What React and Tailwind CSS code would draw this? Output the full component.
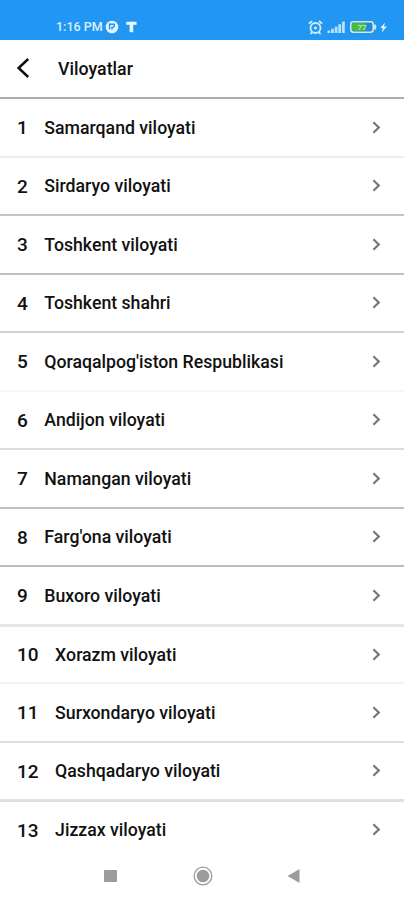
import clsx from "clsx"

const regions = [
  { name: "Samarqand viloyati", line: "border-t-2 border-[#acacac]" },
  { name: "Sirdaryo viloyati", line: "border-t-2 border-[#ececec]" },
  { name: "Toshkent viloyati", line: "border-t-2 border-[#c4c4c4]" },
  { name: "Toshkent shahri", line: "border-t-2 border-[#c0c0c0]" },
  { name: "Qoraqalpog'iston Respublikasi", line: "border-t-2 border-[#d0d0d0]" },
  { name: "Andijon viloyati", line: "border-t-2 border-[#f6f6f6]" },
  { name: "Namangan viloyati", line: "border-t-2 border-[#dcdcdc]" },
  { name: "Farg'ona viloyati", line: "border-t-2 border-[#c0c0c0]" },
  { name: "Buxoro viloyati", line: "border-t-2 border-[#bcbcbc]" },
  { name: "Xorazm viloyati", line: "border-t-3 border-[#e6e6e6]" },
  { name: "Surxondaryo viloyati", line: "border-t-2 border-[#f2f2f2]" },
  { name: "Qashqadaryo viloyati", line: "border-t-2 border-[#dedede]" },
  { name: "Jizzax viloyati", line: "border-t-3 border-[#dfdfdf]" },
]

function AlarmIcon() {
  return (
    <svg width="15" height="15" viewBox="0 0 15 15" fill="none" stroke="#d0ecfb" strokeWidth="1.8" strokeLinecap="round">
      <circle cx="7.5" cy="8" r="5" />
      <circle cx="7.5" cy="8" r="1.5" fill="#d0ecfb" stroke="none" />
      <path d="M1.4 3.2 3.6 1.5M13.6 3.2 11.4 1.5M3.8 12.5 3 13.5M11.2 12.5l.8 1" />
    </svg>
  )
}

function SignalIcon() {
  return (
    <svg width="19" height="12" viewBox="0 0 19 12" fill="#b9dffa">
      <rect x="0.5" y="9.5" width="2.8" height="2.5" />
      <rect x="4.1" y="7.8" width="2.8" height="4.2" />
      <rect x="7.7" y="5.6" width="2.8" height="6.4" />
      <rect x="11.3" y="3.2" width="2.8" height="8.8" />
      <rect x="15" y="0.6" width="2.8" height="11.4" />
    </svg>
  )
}

function BatteryIcon() {
  return (
    <svg width="27" height="12" viewBox="0 0 27 12">
      <rect x="0.8" y="0.8" width="22.4" height="10.4" rx="2.6" fill="#2488d6" stroke="#c9ecea" strokeWidth="1.6" />
      <rect x="2.2" y="2.2" width="13.5" height="7.6" rx="0.8" fill="#4fbb3c" />
      <path d="M24 3.5h1.2q1 0 1 1v3q0 1-1 1H24z" fill="#c9ecea" />
      <text x="12" y="9" fontSize="8" fontWeight="500" textAnchor="middle" fill="#b5ecb9">
        77
      </text>
    </svg>
  )
}

function StatusBar() {
  return (
    <div className="flex h-[39.5px] shrink-0 items-start justify-between bg-[#2196f3] pt-[19px] pr-[17px] pl-14">
      <div className="flex h-4 items-center text-[#d9f0ff]">
        <span className="w-[48px] text-[12.5px] font-medium whitespace-nowrap">1:16 PM</span>
        <svg className="ml-px" width="14" height="14" viewBox="0 0 14 14">
          <circle cx="7" cy="7" r="6.3" fill="#e3f4ff" />
          <path d="M4.6 3.2v6.3M4.6 4.3h4.6v1.2q0 2-2.2 2v2" fill="none" stroke="#2196f3" strokeWidth="1.5" />
        </svg>
        <svg className="ml-[7px]" width="11" height="12" viewBox="0 0 11 12" fill="#e9f7ff">
          <rect x="0.2" y="0.8" width="10.4" height="3" />
          <rect x="3.6" y="0.8" width="3.6" height="10.4" />
        </svg>
      </div>
      <div className="flex h-4 items-center">
        <AlarmIcon />
        <div className="ml-[4px]">
          <SignalIcon />
        </div>
        <div className="ml-1">
          <BatteryIcon />
        </div>
        <svg className="ml-[3px]" width="7" height="11" viewBox="0 0 7 11" fill="#e0f3ff">
          <path d="M5 0.5 0.3 6h2.5L1.8 10.5 6.8 4.6H4z" />
        </svg>
      </div>
    </div>
  )
}

function Header() {
  return (
    <header className="flex h-[57.5px] shrink-0 items-center pl-4">
      <svg width="14" height="20" viewBox="0 0 14 20" fill="none" stroke="#111" strokeWidth="2.5">
        <path d="M12.2 1 2.6 10l9.6 9" />
      </svg>
      <h1 className="ml-7 pt-[2px] text-[17.8px] font-medium">Viloyatlar</h1>
    </header>
  )
}

function RegionRow({ index, name, line }) {
  return (
    <li className={clsx("flex h-[58.5px] items-center justify-between pr-[23px] pl-[17px]", line)}>
      <div className="flex items-center pt-[2px]">
        <span className="text-[19px] font-medium">{index}</span>
        <span className="ml-[16.5px] text-[17.7px] font-medium whitespace-nowrap">{name}</span>
      </div>
      <svg width="9" height="13" viewBox="0 0 9 13" fill="none" stroke="#777" strokeWidth="2.2">
        <path d="M1.4 1.2l5.4 5.3-5.4 5.3" />
      </svg>
    </li>
  )
}

function NavBar() {
  return (
    <nav className="flex h-[45px] shrink-0 items-center bg-white pb-[3px] pl-[104px]">
      <div className="h-3 w-[12.5px] bg-[#9c9c9c]" />
      <svg className="ml-[76px]" width="20" height="20" viewBox="0 0 20 20">
        <circle cx="10" cy="10" r="8.8" fill="none" stroke="#9c9c9c" strokeWidth="1.3" />
        <circle cx="10" cy="10" r="6.3" fill="#9c9c9c" />
      </svg>
      <svg className="ml-[74px]" width="13" height="14" viewBox="0 0 13 14" fill="#9c9c9c">
        <path d="M12.5 0v14L0.5 7z" />
      </svg>
    </nav>
  )
}

export default function App() {
  return (
    <div className="flex h-[900px] w-[404px] flex-col overflow-hidden bg-white font-[Roboto,sans-serif] text-[#111]">
      <StatusBar />
      <Header />
      <ul className="min-h-0 flex-1 overflow-hidden">
        {regions.map((region, i) => (
          <RegionRow key={region.name} index={i + 1} name={region.name} line={region.line} />
        ))}
      </ul>
      <NavBar />
    </div>
  )
}
